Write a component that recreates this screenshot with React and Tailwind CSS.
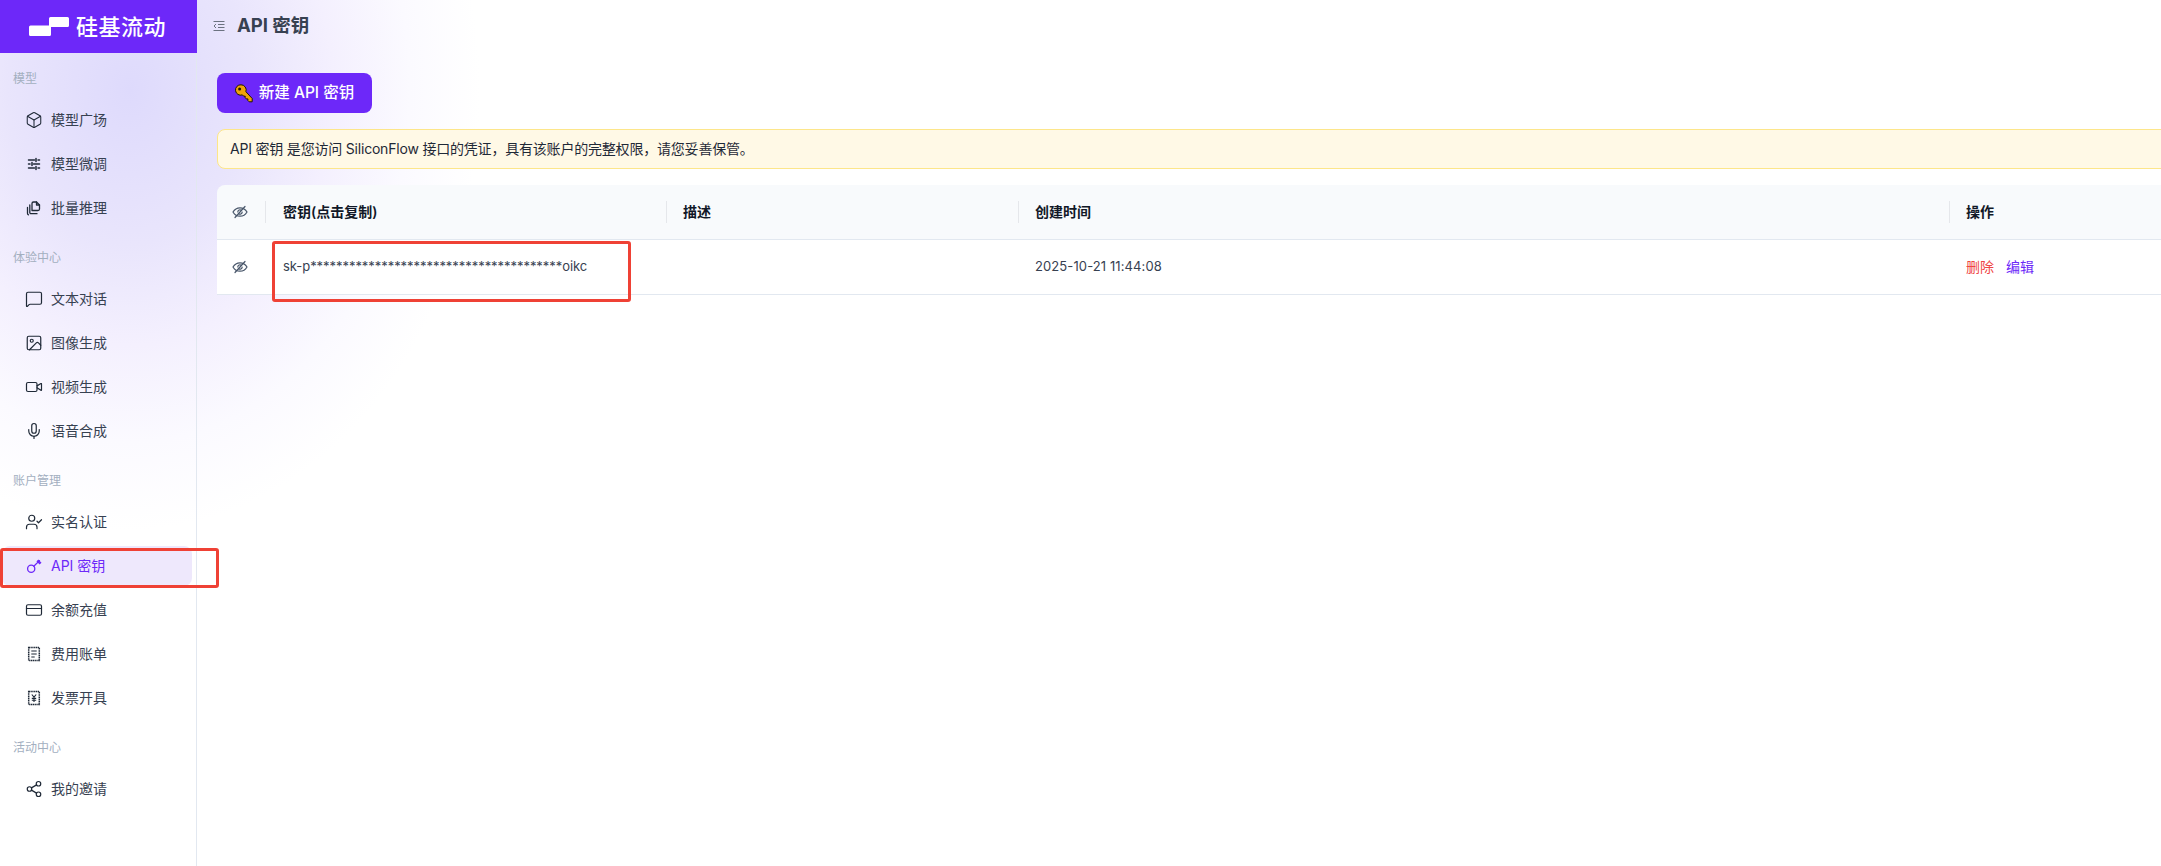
import React from 'react';
import { Box, MessageSquare, Image, Video, Mic, UserCheck, CreditCard, Share2 } from 'lucide-react';

const Sliders = () => (
    <svg width="18" height="18" viewBox="0 0 18 18" fill="none" stroke="currentColor" strokeWidth="1.5" strokeLinecap="round">
        <path d="M3.500 5h6M13 5h1.500M3.500 9h1.500M8.500 9h6M3.500 13h6M13 13h1.500" />
        <path d="M11 3.500v3M7 7.500v3M11 11.500v3" />
    </svg>
);

const Pages = () => (
    <svg width="18" height="18" viewBox="0 0 18 18" fill="none" stroke="currentColor" strokeWidth="1.3" strokeLinejoin="round" strokeLinecap="round">
        <path d="M7 11.500V4.500a1.500 1.500 0 0 1 1.500-1.500h3l3 3v4a1.500 1.500 0 0 1-1.500 1.500Z" />
        <path d="M11.500 3v3h3" />
        <path d="M4.800 6v7.500a1.200 1.200 0 0 0 1.200 1.200h6" />
        <path d="M2.500 8.500v6a1.500 1.500 0 0 0 1 1.300" />
    </svg>
);

const ThinKey = () => (
    <svg width="18" height="18" viewBox="0 0 18 18" fill="none" stroke="currentColor" strokeWidth="1.300" strokeLinecap="round">
        <circle cx="6.200" cy="11.800" r="3.600" />
        <path d="M8.800 9.300 14.500 3.600" />
        <path d="M12.300 4.400l2.300 2.300 1-1-2.300-2.300Z" />
    </svg>
);

const Bill = () => (
    <svg width="18" height="18" viewBox="0 0 18 18" fill="none" stroke="currentColor" strokeWidth="1.500">
        <rect x="3.700" y="2.500" width="10.600" height="13" strokeDasharray="1.300 0.500" />
        <path d="M6.300 6h5.400M6.300 9h5.400M6.300 12h3.400" strokeWidth="1.200" />
    </svg>
);

const Invoice = () => (
    <svg width="18" height="18" viewBox="0 0 18 18" fill="none" stroke="currentColor" strokeWidth="1.500">
        <rect x="3.700" y="2.500" width="10.600" height="13" strokeDasharray="1.300 0.500" />
        <path d="M6.800 5.500 9 8.200l2.200-2.700M9 8.200V13M6.800 9.400h4.400M6.800 11.200h4.400" strokeWidth="1.100" />
    </svg>
);

const EyeSlash = () => (
    <svg width="16" height="16" viewBox="0 0 16 16" fill="none" stroke="#475569" strokeWidth="1.200" strokeLinecap="round">
        <path d="M1 8C2.600 5.200 5 3.800 8 3.800s5.400 1.400 7 4.200c-1.600 2.800-4 4.200-7 4.200S2.600 10.800 1 8Z" />
        <path d="M5.800 8a2.200 2.200 0 0 1 3.600-1.700M10.200 8a2.200 2.200 0 0 1-3.600 1.700" />
        <path d="M3 13.500 13 2.500" />
    </svg>
);

const GoldKey = () => (
    <svg width="18" height="19" viewBox="0 0 18 19">
        <path d="M6 .8a5.200 5.200 0 0 1 4.900 6.900l6.300 6.800v3.300h-3l-1.300-1.300v-1.600h-1.600l-1.100-1.200v-1.500H8.700L7.400 10.900A5.200 5.200 0 1 1 6 .8Z" fill="#f0a30a" stroke="#1f1600" strokeWidth="1" strokeLinejoin="round" />
        <circle cx="4.600" cy="4.900" r="1.500" fill="#1f1600" />
    </svg>
);

const Logo = () => (
    <svg width="40" height="19" viewBox="0 0 40 19" fill="white">
        <path d="M20 1.500a1.500 1.500 0 0 1 1.500-1.500H38.500A1.500 1.500 0 0 1 40 1.500V8.500a1.500 1.500 0 0 1-1.500 1.500H22V17.500a1.500 1.500 0 0 1-1.500 1.500H1.500A1.500 1.500 0 0 1 0 17.500V10A1.500 1.500 0 0 1 1.500 8.500H20Z" />
    </svg>
);

const navGroups = [
    {
        title: '模型',
        items: [
            { label: '模型广场', icon: <Box size={18} strokeWidth={1.4} /> },
            { label: '模型微调', icon: <Sliders /> },
            { label: '批量推理', icon: <Pages /> },
        ],
    },
    {
        title: '体验中心',
        items: [
            { label: '文本对话', icon: <MessageSquare size={18} strokeWidth={1.6} /> },
            { label: '图像生成', icon: <Image size={18} strokeWidth={1.6} /> },
            { label: '视频生成', icon: <Video size={18} strokeWidth={1.6} /> },
            { label: '语音合成', icon: <Mic size={18} strokeWidth={1.6} /> },
        ],
    },
    {
        title: '账户管理',
        items: [
            { label: '实名认证', icon: <UserCheck size={18} strokeWidth={1.6} /> },
            { label: 'API 密钥', icon: <ThinKey />, active: true },
            { label: '余额充值', icon: <CreditCard size={18} strokeWidth={1.6} /> },
            { label: '费用账单', icon: <Bill /> },
            { label: '发票开具', icon: <Invoice /> },
        ],
    },
    {
        title: '活动中心',
        items: [{ label: '我的邀请', icon: <Share2 size={18} strokeWidth={1.6} /> }],
    },
];

const NavItem = ({ item }) => (
    <div className="relative h-[44px] py-[2px]">
        <div
            className={
                item.active
                    ? 'flex items-center h-[40px] w-[190px] ml-[2px] pl-[23px] rounded-lg bg-[#eee8fc] text-[#6d28f9]'
                    : 'flex items-center h-[40px] pl-[25px] text-[#374151]'
            }
        >
            <span className={item.active ? 'text-[#6d28f9]' : 'text-[#1f2937]'}>{item.icon}</span>
            <span className="ml-[8px] text-[14px] leading-none">{item.label}</span>
        </div>
        {item.active && (
            <div className="absolute left-0 top-[4px] w-[219px] h-[40px] border-[3px] border-[#ef4135] rounded-[3px]"></div>
        )}
    </div>
);

const App = () => {
    return (
        <div className="relative h-[866px] w-[2161px] overflow-hidden bg-white font-['Inter','Noto_Sans_CJK_SC',sans-serif]">
            {/* Decorative lavender glow */}
            <div className="absolute left-[-220px] top-[-350px] w-[700px] h-[880px] rounded-full bg-[radial-gradient(closest-side,#dedafc_0%,#e9e5fc_35%,#f4f0fe_58%,#fbfaff_80%,#ffffff_100%)]"></div>

            <div className="relative flex h-full">
                {/* Sidebar */}
                <aside className="w-[197px] shrink-0 border-r border-[#e2e8f0]">
                    <div className="flex items-center w-[197px] h-[53px] pl-[29px] gap-[7px] bg-[#6d28f9]">
                        <Logo />
                        <span className="text-[22px] leading-none font-medium tracking-[0.5px] text-white">硅基流动</span>
                    </div>
                    <nav>
                        {navGroups.map((group, i) => (
                            <div key={group.title} className={i === 0 ? 'pt-[15px] pb-[17px]' : 'pb-[17px]'}>
                                <div className="flex items-center h-[22px] pl-[13px] mb-[8px] text-[12px] text-[#a3afbf]">{group.title}</div>
                                {group.items.map((item) => (
                                    <NavItem key={item.label} item={item} />
                                ))}
                            </div>
                        ))}
                    </nav>
                </aside>

                {/* Main */}
                <main className="flex-1 min-w-0">
                    <header className="flex items-center h-[53px] pb-[2px] pl-[16px]">
                        <svg width="12" height="12" viewBox="0 0 12 12" fill="none" stroke="#6b7280" strokeWidth="1">
                            <path d="M0.500 1.500h11M5 4.500h6.500M5 7.500h6.500M0.500 10.500h11M3 4 1 6l2 2" />
                        </svg>
                        <h1 className="ml-[12px] text-[18.500px] font-bold leading-none text-[#374151]">API 密钥</h1>
                    </header>

                    <div className="pl-[20px] pt-[20px] w-[2100px]">
                        <button className="flex items-center justify-center gap-[6px] w-[155px] h-[40px] rounded-lg bg-[#6d28f9] text-[15.500px] font-medium text-white">
                            <GoldKey />
                            新建 API 密钥
                        </button>

                        <div className="flex items-center h-[40px] mt-[16px] pl-[12px] pb-[1px] rounded-lg border border-[#fde68a] bg-[#fff9e6] text-[14px] tracking-[-0.2px] text-[#1f2937]">
                            API 密钥 是您访问 SiliconFlow 接口的凭证，具有该账户的完整权限，请您妥善保管。
                        </div>

                        {/* Keys table */}
                        <div className="mt-[16px] text-[14px]">
                            <div className="flex h-[55px] items-center pb-[1px] rounded-t-lg border-b border-[#e2e8f0] bg-[#f8fafc] font-semibold text-[#111827]">
                                <div className="flex justify-center w-[46px] mr-[2px]"><EyeSlash /></div>
                                <div className="w-[401px] h-[22px] flex items-center pb-[1px] pl-[17px] border-l border-[#e5e7eb]">密钥(点击复制)</div>
                                <div className="w-[352px] h-[22px] flex items-center pb-[1px] pl-[16px] border-l border-[#e5e7eb]">描述</div>
                                <div className="w-[931px] h-[22px] flex items-center pb-[1px] pl-[16px] border-l border-[#e5e7eb]">创建时间</div>
                                <div className="flex-1 h-[22px] flex items-center pb-[1px] pl-[16px] border-l border-[#e5e7eb]">操作</div>
                            </div>
                            <div className="flex h-[55px] items-center border-b border-[#e2e8f0] bg-white text-[#374151]">
                                <div className="flex justify-center w-[46px] mr-[2px]"><EyeSlash /></div>
                                <div className="relative w-[401px] pl-[18px] text-[13px] tracking-[-0.05px]">
                                    sk-p***************************************oikc
                                    <div className="absolute left-[7px] top-[-16px] w-[359px] h-[61px] border-[3px] border-[#ef4135] rounded-[3px]"></div>
                                </div>
                                <div className="w-[352px]"></div>
                                <div className="w-[931px] pl-[17px] text-[13px] tracking-[0.1px]">2025-10-21 11:44:08</div>
                                <div className="flex-1 pl-[17px] pb-[2px] flex gap-[12px]">
                                    <span className="text-[#ef4444]">删除</span>
                                    <span className="text-[#6d28f9]">编辑</span>
                                </div>
                            </div>
                        </div>
                    </div>
                </main>
            </div>
        </div>
    );
};

export default App;
